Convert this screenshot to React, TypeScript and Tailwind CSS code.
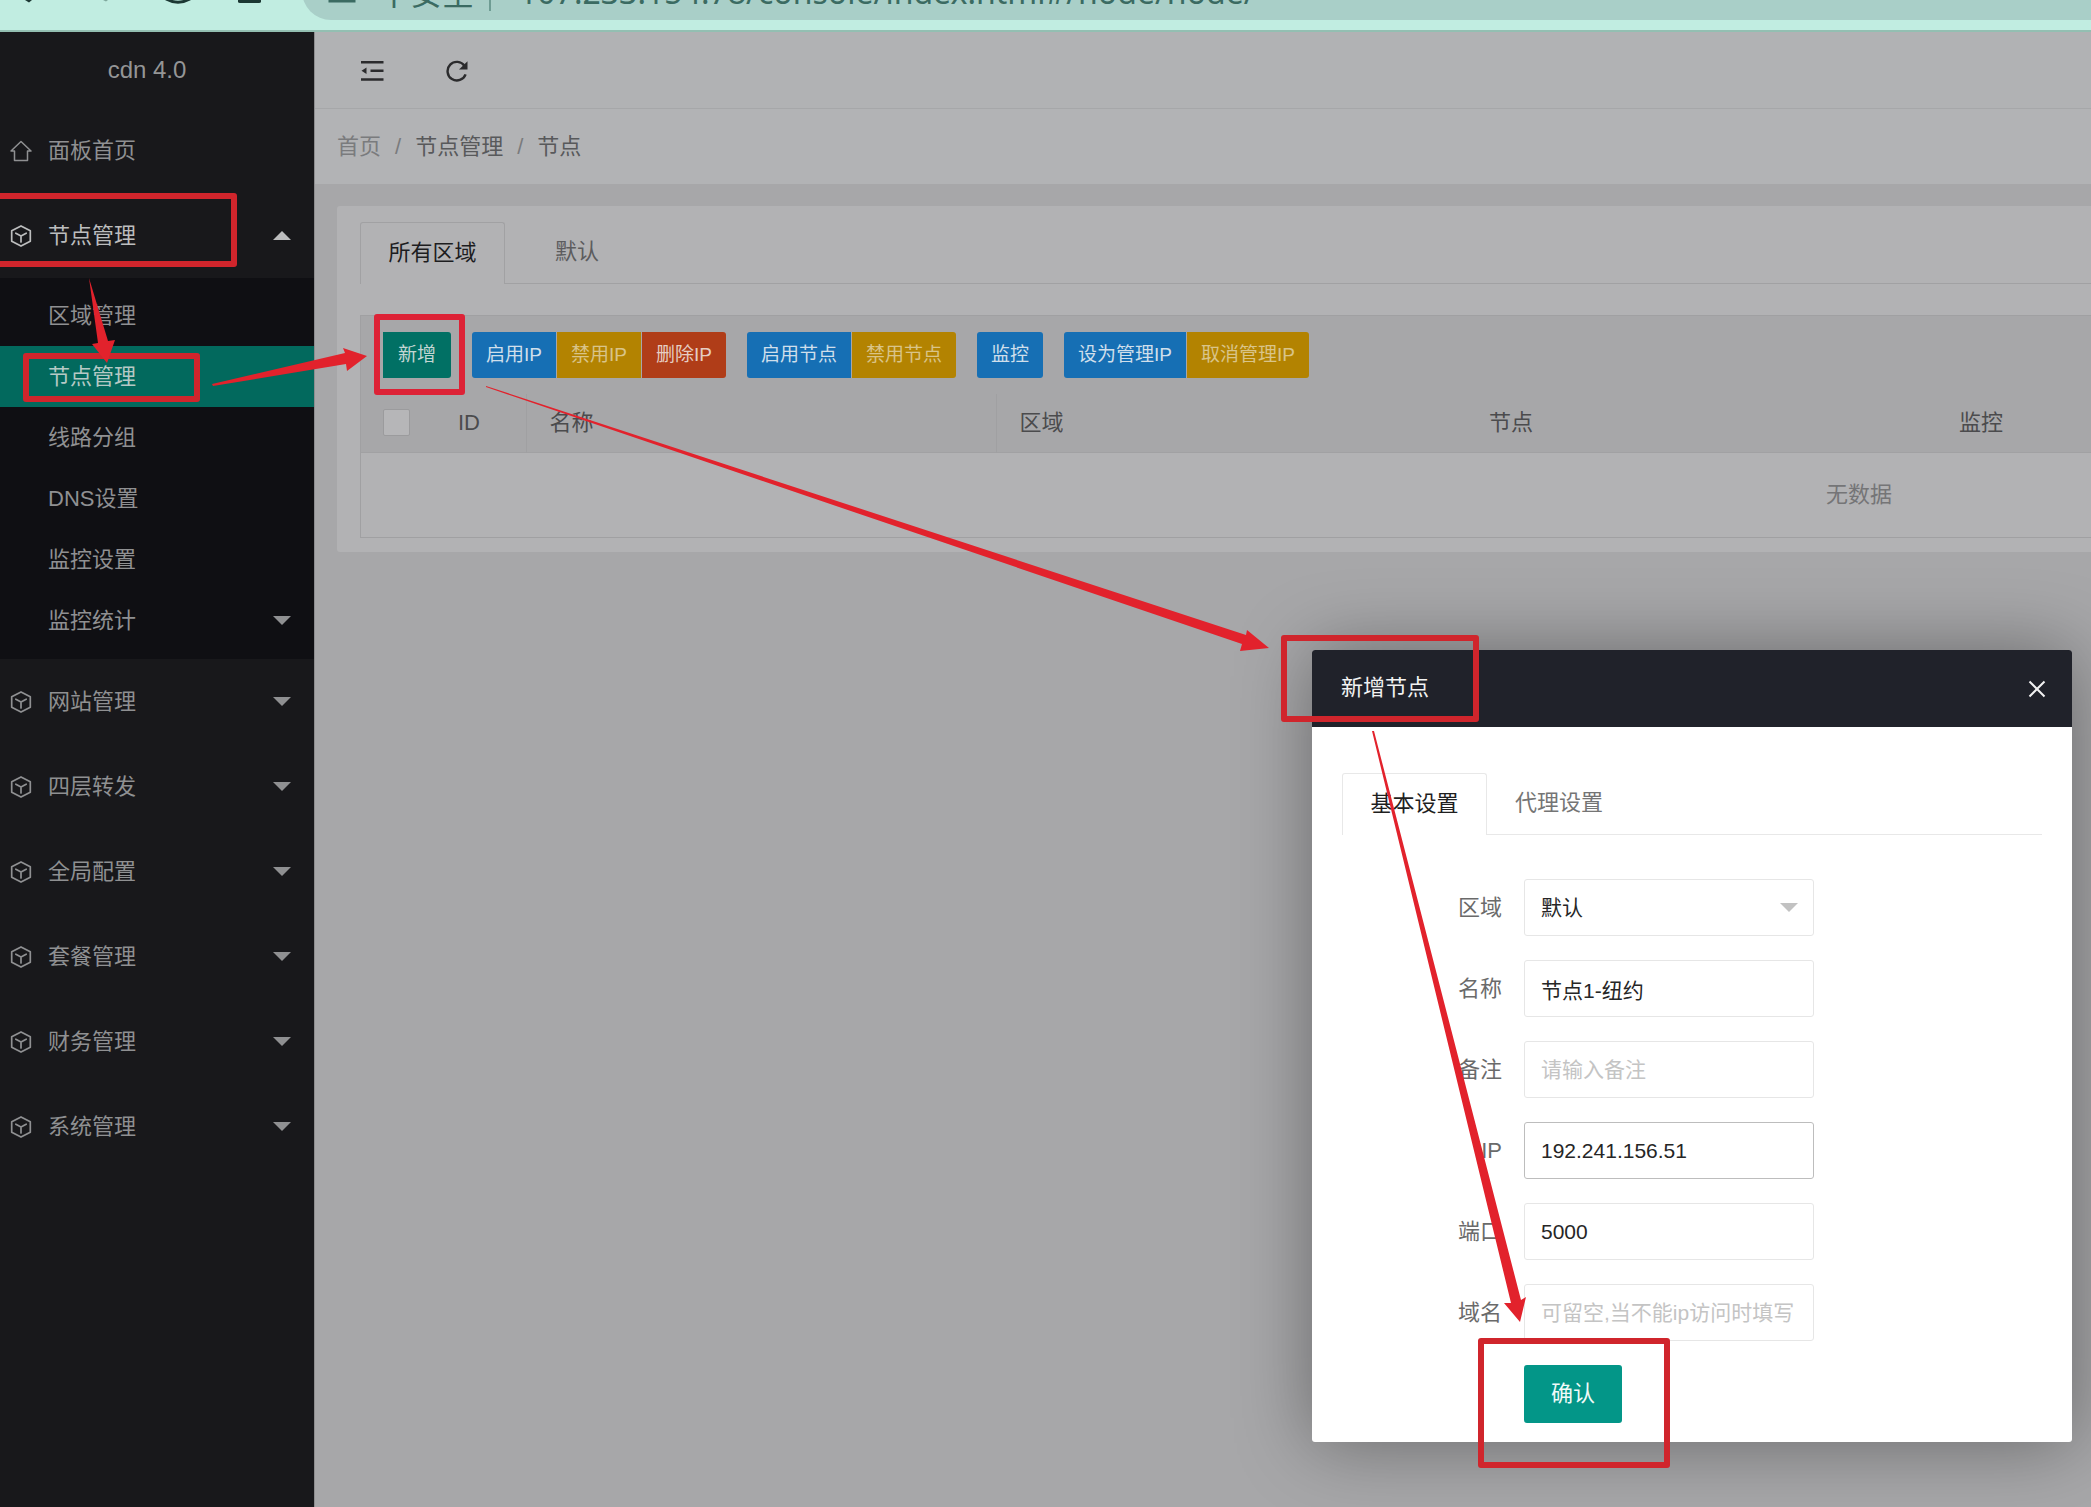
import React from "react";

const sans = "font-['Liberation_Sans','Noto_Sans_CJK_SC',sans-serif]";

function HomeIcon() {
  return (
    <svg viewBox="0 0 22 22" className="h-[22px] w-[22px]" fill="none" stroke="currentColor" strokeWidth="1.5" strokeLinejoin="round">
      <path d="M1 11 L11 1.5 L21 11 H17.5 V20.5 H4.5 V11 Z" />
    </svg>
  );
}

function CubeIcon() {
  return (
    <svg viewBox="0 0 22 22" className="h-[22px] w-[22px]" fill="none" stroke="currentColor" strokeWidth="1.7" strokeLinejoin="round" strokeLinecap="round">
      <path d="M11 0.9 L20.3 5.8 V16.2 L11 21.1 L1.7 16.2 V5.8 Z" />
      <path d="M5.8 8.2 L11 11 L16.2 8.2 M11 11 V17" />
    </svg>
  );
}

function Caret({ up = false, className = "" }: { up?: boolean; className?: string }) {
  return (
    <svg viewBox="0 0 18 9" className={`h-[9px] w-[18px] ${className}`} fill="currentColor">
      <path d={up ? "M0 9 L9 0 L18 9 Z" : "M0 0 L18 0 L9 9 Z"} />
    </svg>
  );
}

function BrowserBar() {
  return (
    <div className="flex h-[32px] items-end overflow-hidden border-b-2 border-[#93bfb2] bg-[#c1ede1]">
      <div className="flex w-[302px] shrink-0 items-end self-start text-[#1c3833]">
        <svg viewBox="0 0 302 6" className="h-[6px] w-[302px]">
          <path d="M25 0 L29 2.6 L32 0 Z" fill="currentColor" />
          <path d="M103 0 L106 1.5 L108 0 Z" fill="#7fa89d" />
          <path d="M166 -1 Q178 5.5 190 -1" fill="none" stroke="currentColor" strokeWidth="3" />
          <path d="M238 0 H261 V1.5 Q261 3 259 3 H240 Q238 3 238 1.5 Z" fill="currentColor" />
        </svg>
      </div>
      <div className="mb-[10px] flex h-[58px] min-w-0 flex-1 items-center rounded-l-full bg-[#a9cfc8] pl-[26px] text-[#3b6b62]">
        <svg viewBox="0 0 28 28" className="h-[28px] w-[28px] shrink-0" fill="none" stroke="currentColor" strokeWidth="3">
          <rect x="2" y="10" width="24" height="14" />
          <path d="M8 10 V5 Q14 0 20 5 V10" />
        </svg>
        <span className="ml-[22px] shrink-0 font-['Noto_Sans_CJK_SC',sans-serif] text-[32px] leading-none">不安全</span>
        <span className="ml-[15px] mt-[4px] h-[36px] w-[2px] shrink-0 bg-[#6e9c93]" />
        <input
          aria-label="地址栏"
          readOnly
          value="107.233.154.78/console/index.html#/node/node/"
          className="ml-[28px] min-w-0 flex-1 bg-transparent font-['Noto_Sans',sans-serif] text-[32px] leading-none outline-none"
        />
      </div>
    </div>
  );
}

const subItems = ["区域管理", "节点管理", "线路分组", "DNS设置", "监控设置", "监控统计"];
const menuItems = ["网站管理", "四层转发", "全局配置", "套餐管理", "财务管理", "系统管理"];

function Sidebar() {
  return (
    <nav className="w-[314px] shrink-0 bg-[#18181b] text-[22px] text-[#8f9092]">
      <div className="flex h-[76px] items-center justify-center pr-5 text-[24px] text-[#949596]">cdn 4.0</div>
      <a href="#home" className="flex h-[85px] items-center gap-4 pl-[10px]">
        <HomeIcon />
        面板首页
      </a>
      <button className="flex h-[85px] w-full items-center gap-4 pl-[10px] pr-[23px] text-[#bcbdbe]">
        <CubeIcon />
        节点管理
        <Caret up className="ml-auto" />
      </button>
      <div className="bg-[#0f0f13] pb-2 pt-[7px]">
        {subItems.map((t, i) => (
          <a
            key={t}
            href={`#sub-${i}`}
            className={`flex h-[61px] items-center pl-12 pr-[23px] ${i === 1 ? "bg-[#02695d] text-[#b5c9c5]" : ""}`}
          >
            {t}
            {i === 5 && <Caret className="ml-auto" />}
          </a>
        ))}
      </div>
      {menuItems.map((t) => (
        <button key={t} className="flex h-[85px] w-full items-center gap-4 pl-[10px] pr-[23px]">
          <CubeIcon />
          {t}
          <Caret className="ml-auto" />
        </button>
      ))}
    </nav>
  );
}

function TopBar() {
  return (
    <header className="flex h-[77px] items-center gap-[61px] border-b border-[#a6a7a9] bg-[#b1b2b4] pl-[45px] pt-[2px] text-[#2b2b2d]">
      <button aria-label="收起菜单">
        <svg viewBox="0 0 24 22" className="h-[22px] w-[24px]" fill="none" stroke="currentColor" strokeWidth="2.4">
          <path d="M1 2.2 H23.5 M10.5 10.8 H23.5 M1 19.5 H23.5" />
          <path d="M1.5 10.8 L6.5 7.6 V14 Z" fill="currentColor" stroke="none" />
        </svg>
      </button>
      <button aria-label="刷新">
        <svg viewBox="0 0 24 22" className="h-[22px] w-[24px]" fill="none" stroke="currentColor" strokeWidth="2.4">
          <path d="M19.6 6 A9.3 9.3 0 1 0 20.6 14.4" />
          <path d="M22.5 1.2 V9.5 H14 Z" fill="currentColor" stroke="none" />
        </svg>
      </button>
    </header>
  );
}

function ToolButton({ children, className }: { children: React.ReactNode; className: string }) {
  return (
    <button className={`flex h-[46px] items-center whitespace-nowrap px-[14px] text-[19px] ${className}`}>
      {children}
    </button>
  );
}

function Panel() {
  return (
    <section className="ml-[22px] mt-[22px] overflow-hidden rounded-l-[3px] bg-[#b2b2b4] pb-[14px] pl-[23px] pt-4 text-[22px]">
      <div role="tablist" className="flex h-[62px] w-full">
        <button role="tab" aria-selected="true" className="w-[145px] rounded-t-[3px] border border-b-0 border-[#a1a1a3] pb-[2px] text-[#1d1d1f]">
          所有区域
        </button>
        <button role="tab" aria-selected="false" className="w-[144px] border-b border-[#a1a1a3] pb-[2px] text-[#5c5c5e]">
          默认
        </button>
        <div className="flex-1 border-b border-[#a1a1a3]" />
      </div>
      <div className="mt-[31px] min-w-[2998px] border border-[#a0a0a2]">
        <div className="flex h-[78px] items-start gap-[21px] bg-[#a7a7a9] px-[22px] pt-[16px]">
          <ToolButton className="rounded-r-[3px] bg-[#017064] px-[15px] text-[#c3d6d3]">新增</ToolButton>
          <div className="flex gap-px">
            <ToolButton className="rounded-l-[3px] bg-[#166fb4] text-[#cfdfeb]">启用IP</ToolButton>
            <ToolButton className="bg-[#b38301] text-[#d9c489]">禁用IP</ToolButton>
            <ToolButton className="rounded-r-[3px] bg-[#b03d18] text-[#e6cdc3]">删除IP</ToolButton>
          </div>
          <div className="flex gap-px">
            <ToolButton className="rounded-l-[3px] bg-[#166fb4] text-[#cfdfeb]">启用节点</ToolButton>
            <ToolButton className="rounded-r-[3px] bg-[#b38301] text-[#d9c489]">禁用节点</ToolButton>
          </div>
          <ToolButton className="rounded-[3px] bg-[#166fb4] text-[#cfdfeb]">监控</ToolButton>
          <div className="flex gap-px">
            <ToolButton className="rounded-l-[3px] bg-[#166fb4] text-[#cfdfeb]">设为管理IP</ToolButton>
            <ToolButton className="rounded-r-[3px] bg-[#b38301] text-[#d9c489]">取消管理IP</ToolButton>
          </div>
        </div>
        <table className="w-full table-fixed border-collapse text-left">
          <colgroup>
            <col className="w-[74px]" />
            <col className="w-[91px]" />
            <col className="w-[470px]" />
            <col className="w-[470px]" />
            <col className="w-[470px]" />
            <col className="w-[470px]" />
            <col />
          </colgroup>
          <thead className="bg-[#a7a7a9] text-[#4b4b4d]">
            <tr className="h-[58px] border-b border-[#a1a1a3]">
              <th className="pl-[22px] font-normal">
                <input
                  type="checkbox"
                  aria-label="全选"
                  className="block h-[27px] w-[27px] appearance-none rounded-[2px] border border-[#9b9b9d] bg-[#b6b6b8]"
                />
              </th>
              <th className="border-r border-[#a0a0a2] pl-[23px] font-normal">ID</th>
              <th className="border-r border-[#a0a0a2] pl-[23px] font-normal">名称</th>
              <th className="pl-[23px] font-normal">区域</th>
              <th className="pl-[23px] font-normal">节点</th>
              <th className="pl-[23px] font-normal">监控</th>
              <th />
            </tr>
          </thead>
          <tbody>
            <tr className="h-[85px]">
              <td colSpan={7} className="text-center text-[#757577]">
                无数据
              </td>
            </tr>
          </tbody>
        </table>
      </div>
    </section>
  );
}

const inputClass =
  "h-[57px] w-[290px] rounded-[3px] border bg-white px-4 text-[21px] text-[#262626] outline-none placeholder:text-[#c4c4c4]";

function Field({ id, label, children }: { id: string; label: string; children: React.ReactNode }) {
  return (
    <div className="flex items-center gap-[22px]">
      <label htmlFor={id} className="w-[160px] text-right text-[#6a6a6a]">
        {label}
      </label>
      {children}
    </div>
  );
}

function Dialog() {
  return (
    <div
      role="dialog"
      aria-label="新增节点"
      className="absolute right-[19px] top-[650px] w-[760px] rounded-[3px] bg-white pb-[19px] text-[22px] shadow-[1px_1px_76px_rgba(0,0,0,0.38)]"
    >
      <div className="flex h-[77px] items-center justify-between rounded-t-[3px] bg-[#20222a] pl-[29px] pr-[26px] text-[#f2f2f2]">
        <h2 className="pb-[2px]">新增节点</h2>
        <button aria-label="关闭">
          <svg viewBox="0 0 18 18" className="h-[18px] w-[18px]" stroke="currentColor" strokeWidth="2">
            <path d="M1.5 1.5 L16.5 16.5 M16.5 1.5 L1.5 16.5" />
          </svg>
        </button>
      </div>
      <div className="px-[30px] pt-[46px]">
        <div role="tablist" className="flex h-[62px]">
          <button role="tab" aria-selected="true" className="w-[145px] rounded-t-[3px] border border-b-0 border-[#e8e8e8] pb-[2px] text-[#1f1f1f]">
            基本设置
          </button>
          <button role="tab" aria-selected="false" className="w-[144px] border-b border-[#e8e8e8] pb-[2px] text-[#757575]">
            代理设置
          </button>
          <div className="flex-1 border-b border-[#e8e8e8]" />
        </div>
        <form className="mt-11 flex flex-col gap-6" onSubmit={(e) => e.preventDefault()}>
          <Field id="area" label="区域">
            <div className="relative">
              <select id="area" className={`${inputClass} appearance-none border-[#e6e6e6]`}>
                <option>默认</option>
              </select>
              <Caret className="pointer-events-none absolute right-4 top-6 text-[#c2c2c2]" />
            </div>
          </Field>
          <Field id="name" label="名称">
            <input id="name" defaultValue="节点1-纽约" className={`${inputClass} border-[#e6e6e6]`} />
          </Field>
          <Field id="remark" label="备注">
            <input id="remark" placeholder="请输入备注" className={`${inputClass} border-[#e6e6e6]`} />
          </Field>
          <Field id="ip" label="IP">
            <input id="ip" defaultValue="192.241.156.51" className={`${inputClass} border-[#bdbdbd]`} />
          </Field>
          <Field id="port" label="端口">
            <input id="port" defaultValue="5000" className={`${inputClass} border-[#e6e6e6]`} />
          </Field>
          <Field id="domain" label="域名">
            <input id="domain" placeholder="可留空,当不能ip访问时填写" className={`${inputClass} border-[#e6e6e6]`} />
          </Field>
          <button type="submit" className="ml-[182px] h-[58px] w-[98px] rounded-[3px] bg-[#039688] pb-[2px] text-[#f0faf8]">
            确认
          </button>
        </form>
      </div>
    </div>
  );
}

function Annotations() {
  return (
    <svg viewBox="0 0 2091 1507" className="pointer-events-none absolute left-0 top-0 h-[1507px] w-[2091px]" fill="none" strokeWidth="6" strokeLinejoin="round">
      <g stroke="#d0252c">
        <rect x="-10" y="196" width="244" height="68" />
        <rect x="26" y="356" width="171" height="43" />
        <rect x="377" y="317" width="85" height="75" stroke="#dd2236" />
        <rect x="1284" y="638" width="192" height="81" />
        <rect x="1481" y="1341" width="186" height="124" />
      </g>
      <g fill="#e2222c">
        <path d="M89 278 L108 341 L115 340 L107 363 L92 344 L98 343 Z" />
        <path d="M212 384 L345 353 L343 348 L367 356 L347 371 L346 364 L213 386 Z" />
        <path d="M486 386 L1246 635 L1247 630 L1269 648 L1240 651 L1242 644 L486 387 Z" />
        <path d="M1372 731 L1374 731 L1521 1300 L1526 1297 L1520 1322 L1504 1303 L1511 1303 Z" />
      </g>
    </svg>
  );
}

export default function App() {
  return (
    <div className={`relative flex min-h-screen flex-col overflow-hidden bg-[#a7a7a9] ${sans}`}>
      <BrowserBar />
      <div className="flex flex-1">
        <Sidebar />
        <main className="min-w-0 flex-1 overflow-hidden border-l border-[#8d8d8f]">
          <TopBar />
          <nav aria-label="面包屑" className="flex h-[75px] items-center gap-[14px] bg-[#b2b3b5] pl-[22px] text-[22px] text-[#58595b]">
            <a href="#index" className="text-[#7a7b7d]">首页</a>
            <span className="text-[#7a7b7d]">/</span>
            <a href="#nodes">节点管理</a>
            <span className="text-[#7a7b7d]">/</span>
            <span>节点</span>
          </nav>
          <Panel />
        </main>
      </div>
      <Dialog />
      <Annotations />
    </div>
  );
}
